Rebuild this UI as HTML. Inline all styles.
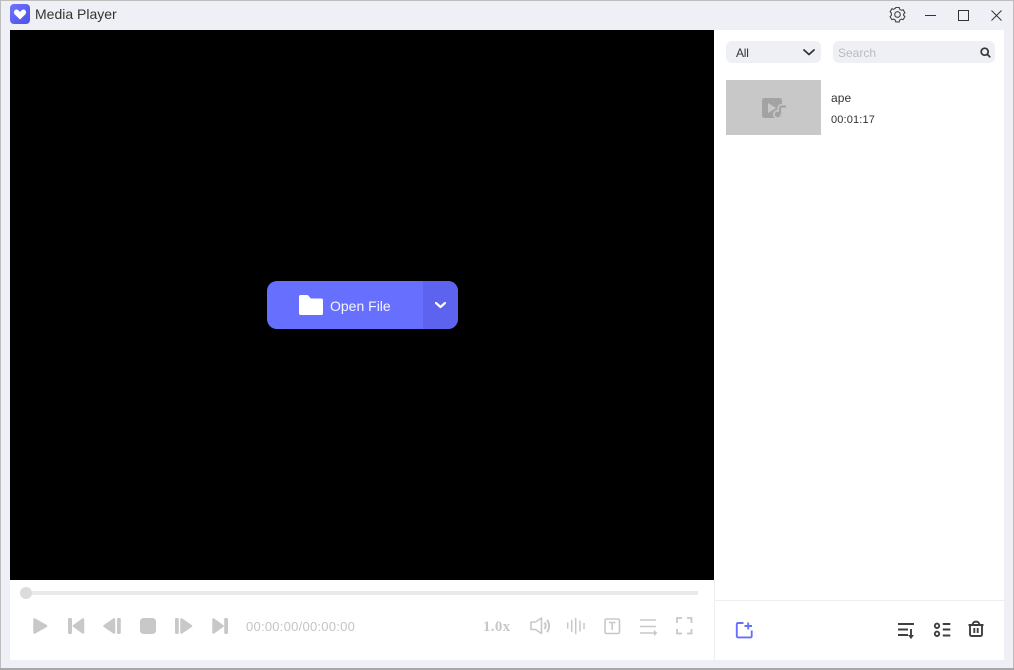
<!DOCTYPE html>
<html><head><meta charset="utf-8"><style>
html,body{margin:0;padding:0;width:1014px;height:670px;overflow:hidden;background:#eff0f5}
body{position:relative;font-family:"Liberation Sans",sans-serif}
.a{position:absolute}
svg{position:absolute;overflow:visible}
.t{position:absolute;white-space:nowrap;line-height:1}
</style></head><body>
<div class="a" style="left:0;top:0;width:1014px;height:1px;background:#bdbdbd"></div>
<div class="a" style="left:0;top:0;width:1px;height:670px;background:#bdbdbd"></div>
<div class="a" style="left:1013px;top:0;width:1px;height:670px;background:#bdbdbd"></div>
<div class="a" style="left:0;top:668px;width:1014px;height:2px;background:#a8a8a8"></div>

<svg style="left:10px;top:4px" width="20" height="20" viewBox="0 0 20 20"><defs><linearGradient id="g" x1="0" y1="0" x2="1" y2="1"><stop offset="0" stop-color="#6f74ff"/><stop offset="1" stop-color="#4b50e8"/></linearGradient></defs><rect width="20" height="20" rx="4" fill="url(#g)"/><path d="M10 15.500 4.600 10.200C3.200 8.700 4.200 5.500 6.400 5.500 8 5.500 9 6.900 10 8 11 6.900 12 5.500 13.600 5.500c2.200 0 3.200 3.200 1.800 4.700Z" fill="#fff"/></svg>
<div class="t" style="left:35px;top:7px;font-size:14px;color:#333">Media Player</div>

<svg style="left:889px;top:6px" width="17" height="17" viewBox="0 0 17 17" fill="none" stroke="#444" stroke-width="1.100"><path d="M6.800 1.500h3.400l.5 1.800 1.700 1 1.800-.5 1.700 3-1.300 1.300v1.200l1.300 1.300-1.700 3-1.800-.5-1.700 1-.5 1.800H6.800l-.5-1.800-1.700-1-1.800.5-1.700-3 1.300-1.300V7.100L1.100 5.800l1.700-3 1.800.5 1.700-1z"/><circle cx="8.500" cy="8.500" r="2.800"/></svg>
<div class="a" style="left:925px;top:15px;width:11px;height:1px;background:#333"></div>
<div class="a" style="left:958px;top:10px;width:9px;height:9px;border:1px solid #333"></div>
<svg style="left:991px;top:10px" width="11" height="11" viewBox="0 0 11 11" stroke="#333" fill="none"><path d="M.5.500l10 10M10.500.500l-10 10"/></svg>

<div class="a" style="left:10px;top:30px;width:704px;height:550px;background:#000"></div>
<div class="a" style="left:10px;top:580px;width:704px;height:80px;background:#fff"></div>
<div class="a" style="left:714px;top:30px;width:290px;height:630px;background:#fff"></div>
<div class="a" style="left:714px;top:580px;width:1px;height:80px;background:#eceef1"></div>
<div class="a" style="left:715px;top:600px;width:289px;height:1px;background:#eceef1"></div>

<div class="a" style="left:267px;top:281px;width:191px;height:48px;border-radius:10px;background:#676fff;overflow:hidden"><div class="a" style="left:156px;top:0;width:35px;height:48px;background:#5d63ef"></div></div>
<svg style="left:299px;top:295px" width="24" height="20" viewBox="0 0 24 20"><path d="M1.500 0h7.300l3 3.500h10.700c.8 0 1.500.7 1.500 1.500v13.500c0 .8-.7 1.500-1.500 1.500H1.500C.7 20 0 19.300 0 18.500V1.500C0 .7.700 0 1.500 0z" fill="#fff"/></svg>
<div class="t" style="left:330px;top:299px;font-size:14px;color:#f4f4ff">Open File</div>
<svg style="left:435px;top:302px" width="11" height="7" viewBox="0 0 11 7" fill="none" stroke="#fff" stroke-width="2.200" stroke-linecap="round" stroke-linejoin="round"><path d="M1 1l4.500 4L10 1"/></svg>

<div class="a" style="left:26px;top:591px;width:672px;height:4px;background:#e9e9e9"></div>
<div class="a" style="left:20px;top:587px;width:12px;height:12px;border-radius:50%;background:#dcdcdc"></div>

<svg style="left:0;top:0" width="720" height="670" fill="#c8c8c8" stroke-linejoin="round">
<g stroke="#c8c8c8" stroke-width="2.500">
<path d="M34.500 619.500v13l11.500-6.500z"/>
<path d="M83 619.500v13l-9-6.500z"/>
<path d="M114 619.500v13l-9.500-6.500z"/>
<path d="M181.500 619.500v13l9.500-6.500z"/>
<path d="M213.500 619.500v13l9-6.500z"/>
</g>
<rect x="68" y="618" width="4" height="16" rx="1.200"/>
<rect x="117" y="618" width="3.800" height="16" rx="1.200"/>
<rect x="140" y="618" width="16" height="16" rx="3.500"/>
<rect x="175" y="618" width="3.800" height="16" rx="1.200"/>
<rect x="224.200" y="618" width="3.800" height="16" rx="1.200"/>
</svg>
<div class="t" style="left:246px;top:620px;font-size:13px;color:#c4c4c8;letter-spacing:.25px">00:00:00/00:00:00</div>
<div class="t" style="left:483px;top:620px;font-family:'Liberation Serif',serif;font-weight:bold;font-size:15px;color:#c8c8c8;letter-spacing:.3px">1.0x</div>

<svg style="left:0;top:0" width="720" height="670" fill="none" stroke="#c8c8c8" stroke-width="1.600">
<path d="M531 622h4.500l6-4v15.500l-6-4H531z" stroke-linejoin="round"/><path d="M544.500 622.500c1.500 2 1.500 4.500 0 6.500M547 620c2.800 3.500 2.800 8.500 0 12" stroke-width="2"/>
<path d="M567.700 623v5M571.700 620.500v11M575.700 618.500v15M580 621v10M584 623.500v5" stroke-linecap="round" stroke-width="1.500"/>
<rect x="605" y="619" width="14.500" height="14.500" rx="1.500"/><path d="M609 622.500h6.500M612.200 622.500v7.500"/>
<path d="M640 620h16M640 626.500h16M640 633h15" stroke-width="1.600"/><path d="M654 630.500l2.500 2.500-2.500 2.500" fill="#c8c8c8" stroke-width="1"/>
<path d="M677 623v-5h5M687 618h4.500v5M691.500 629v4.500H687M682 633.500h-5V629" stroke-width="1.800"/>
</svg>

<div class="a" style="left:726px;top:41px;width:95px;height:22px;border-radius:6px;background:#eff0f5"></div>
<div class="t" style="left:736px;top:47px;font-size:12px;color:#333;letter-spacing:-.2px">All</div>
<svg style="left:803px;top:49px" width="12" height="7" viewBox="0 0 12 7" fill="none" stroke="#333" stroke-width="1.800" stroke-linecap="round" stroke-linejoin="round"><path d="M1 1l5 4.500L11 1"/></svg>
<div class="a" style="left:833px;top:41px;width:162px;height:22px;border-radius:6px;background:#eff0f5"></div>
<div class="t" style="left:838px;top:47px;font-size:12px;color:#b9bbc0">Search</div>
<svg style="left:980px;top:47px" width="11" height="11" viewBox="0 0 11 11" fill="none" stroke="#333" stroke-width="1.700"><circle cx="4.700" cy="4.700" r="3.500"/><path d="M7.500 7.500l2.300 2.300" stroke-linecap="round"/></svg>

<div class="a" style="left:726px;top:80px;width:95px;height:55px;background:#c8c8c8"></div>
<svg style="left:762px;top:98px" width="26" height="20" viewBox="0 0 26 20"><rect width="20" height="20" rx="2.500" fill="#a3a3a3"/><path d="M6 5l8 5-8 5z" fill="#c8c8c8"/>
<path d="M18 16.500V10c0-1 .6-1.500 1.500-1.500H24" fill="none" stroke="#c8c8c8" stroke-width="5"/><circle cx="15.500" cy="16.500" r="4.500" fill="#c8c8c8"/>
<path d="M18 16.500V10.500c0-1.500.8-2 2-2H24" fill="none" stroke="#a3a3a3" stroke-width="2.200"/><circle cx="15.500" cy="16.500" r="2.900" fill="#a3a3a3"/></svg>
<div class="t" style="left:831px;top:92px;font-size:12px;color:#333;letter-spacing:.1px">ape</div>
<div class="t" style="left:831px;top:115px;font-size:11px;color:#333;letter-spacing:.15px">00:01:17</div>

<svg style="left:0;top:0" width="1014" height="670" fill="none">
<path d="M743.500 623h-5.500a1.200 1.200 0 0 0-1.200 1.200v12a1.200 1.200 0 0 0 1.200 1.200h12.500a1.200 1.200 0 0 0 1.200-1.200V630.500" stroke="#676fff" stroke-width="1.900"/><path d="M744.500 626h7.500M748.200 622.500v7" stroke="#676fff" stroke-width="1.900"/>
<g stroke="#3f3f3f" stroke-width="1.900"><path d="M898 624h16M898 629.500h10M898 635h10M911 629v8"/><path d="M909 635.500l2 2.800 2-2.800z" fill="#3f3f3f" stroke-width="1"/>
<circle cx="937" cy="625.800" r="2.200"/><circle cx="937" cy="633.800" r="2.200"/><path d="M942.800 624h7.500M942.800 629.500h7.500M942.800 635.500h7.500"/>
<path d="M968.500 625h15M972.500 625c0-4.500 7-4.500 7 0"/><path d="M970 625v9.500a1.500 1.500 0 0 0 1.500 1.500h9a1.500 1.500 0 0 0 1.500-1.500V625M974.300 628v5M977.700 628v5"/></g>
</svg>
</body></html>
